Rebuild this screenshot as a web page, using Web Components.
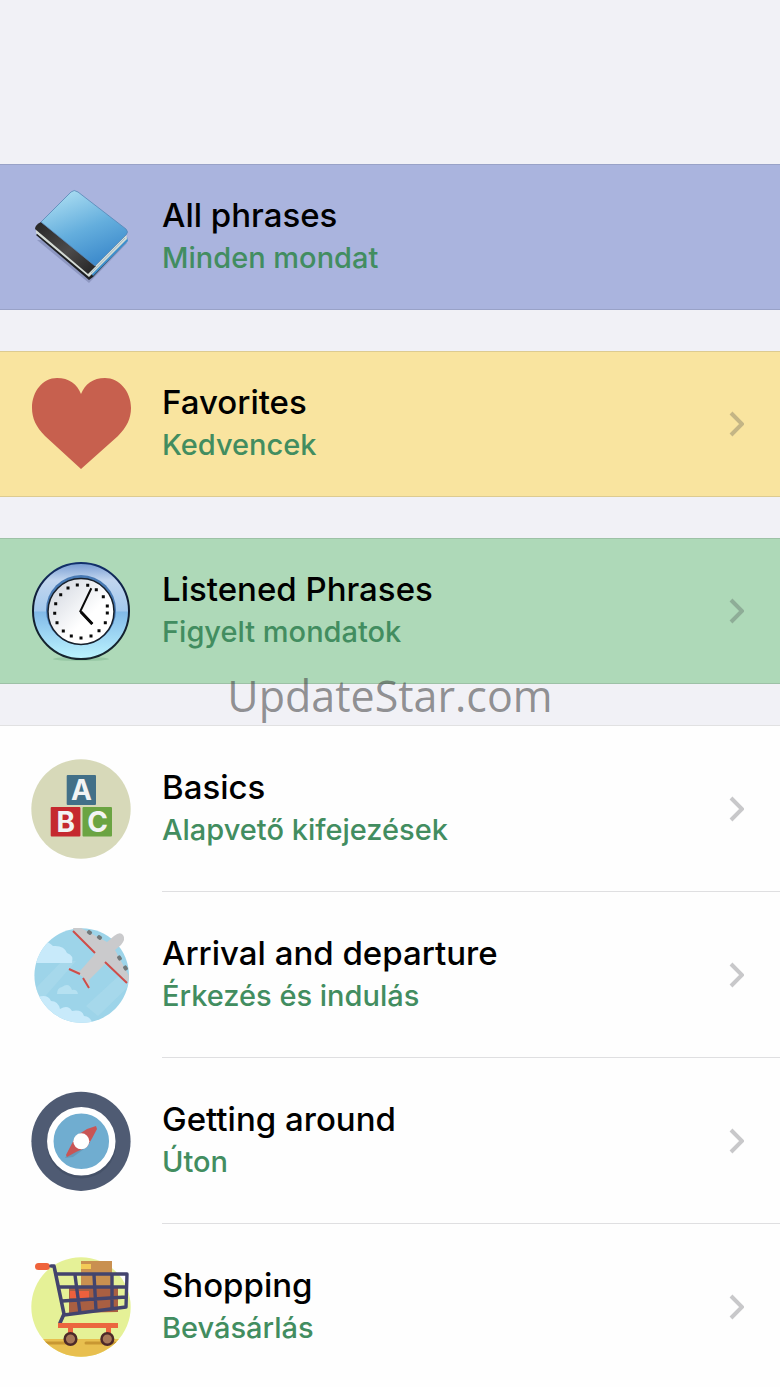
<!DOCTYPE html>
<html lang="en">
<head>
  <meta charset="utf-8">
  <meta name="viewport" content="width=device-width, initial-scale=1">
  <title>Phrases</title>
  <style>
    body {
      margin: 0;
      background: #f1f1f6;
      color: #000;
      font-family: Inter, "Liberation Sans", sans-serif;
    }
  </style>
</head>
<body>
  <phrase-app>
    <phrase-group tone="blue">
      <phrase-row icon="book">All phrases<span slot="translation" lang="hu">Minden mondat</span></phrase-row>
    </phrase-group>
    <phrase-group tone="yellow">
      <phrase-row icon="heart" chevron>Favorites<span slot="translation" lang="hu">Kedvencek</span></phrase-row>
    </phrase-group>
    <phrase-group tone="green">
      <phrase-row icon="clock" chevron>Listened Phrases<span slot="translation" lang="hu">Figyelt mondatok</span></phrase-row>
    </phrase-group>
    <phrase-group>
      <phrase-row icon="blocks" chevron>Basics<span slot="translation" lang="hu">Alapvető kifejezések</span></phrase-row>
      <phrase-row icon="plane" chevron>Arrival and departure<span slot="translation" lang="hu">Érkezés és indulás</span></phrase-row>
      <phrase-row icon="compass" chevron>Getting around<span slot="translation" lang="hu">Úton</span></phrase-row>
      <phrase-row icon="cart" chevron>Shopping<span slot="translation" lang="hu">Bevásárlás</span></phrase-row>
    </phrase-group>
    <site-mark slot="mark">UpdateStar.com</site-mark>
  </phrase-app>

  <script>
    const ICONS = {
      book: `
        <defs>
          <linearGradient id="cover" x1=".3" y1="0" x2=".75" y2="1">
            <stop offset="0" stop-color="#a9dcf1"/>
            <stop offset=".5" stop-color="#64aedd"/>
            <stop offset="1" stop-color="#3785c9"/>
          </linearGradient>
          <linearGradient id="spine" x1="0" y1="0" x2="1" y2="1">
            <stop offset="0" stop-color="#262626"/>
            <stop offset=".55" stop-color="#4c4a4a"/>
            <stop offset="1" stop-color="#222"/>
          </linearGradient>
        </defs>
        <path d="M6 53 58 96 96 56 90 50Z" fill="#59618c" opacity=".35"/>
        <path d="M5 48 58 93 62 90 96 54 95 50 58 86 8 45Z" fill="#1e2023"/>
        <path d="M62 89 97 54 96 50 60 86Z" fill="#3d8ecb"/>
        <path d="M5 43 5 46 58 90 96 52 95 46 60 80Z" fill="#d5dcd6"/>
        <path d="M60 86 94 51" fill="none" stroke="#9fbccb" stroke-width="1"/>
        <path d="M10 35Q4 38 4 42L57 87 65 79Z" fill="url(#spine)"/>
        <path d="M10 35 40 5Q43 2 47 5L95 42Q98 45 95 48L64 79Z" fill="url(#cover)" stroke="#5686b6" stroke-width=".8"/>`,
      heart: `<path d="M50 95 14 62C5 53 1 44 1 34 1 17 12 4 26 4c12 0 20 6 24 16C54 10 62 4 74 4c14 0 26 13 26 30 0 10-4 19-13 28Z" fill="#c7604e"/>`,
      clock: `
        <defs>
          <linearGradient id="ring" x1="0" y1="0" x2="0" y2="1">
            <stop offset="0" stop-color="#769bd2"/>
            <stop offset=".18" stop-color="#c2d6ef"/>
            <stop offset=".5" stop-color="#a3c9ed"/>
            <stop offset=".51" stop-color="#82bae8"/>
            <stop offset="1" stop-color="#bcf4ff"/>
          </linearGradient>
          <linearGradient id="rim" x1="0" y1="0" x2="0" y2="1">
            <stop offset="0" stop-color="#12306d"/>
            <stop offset=".4" stop-color="#101c30"/>
            <stop offset="1" stop-color="#17262e"/>
          </linearGradient>
          <linearGradient id="face" x1="0" y1="0" x2="1" y2="1">
            <stop offset="0" stop-color="#cdd2dc"/>
            <stop offset=".6" stop-color="#fff"/>
          </linearGradient>
        </defs>
        <ellipse cx="50" cy="98" rx="28" ry="2" fill="#65a276" opacity=".3"/>
        <circle cx="50" cy="50" r="48" fill="url(#ring)" stroke="url(#rim)" stroke-width="2"/>
        <circle cx="50" cy="49" r="35" fill="#4779b3"/>
        <circle cx="50" cy="50.500" r="33" fill="url(#face)" stroke="#17202b" stroke-width="1.500"/>
        <path d="M46.300 24h.01M56.700 24.300h.01M65.300 28.700h.01M72.300 35.700h.01M76.300 45h.01M76.300 52h.01M74.300 61.700h.01M68 69.700h.01M60 75h.01M50 77h.01M40.300 75h.01M32.300 70h.01M26 61.700h.01M23.700 52.300h.01M24.700 42.700h.01M29.700 33.700h.01M37 27h.01" stroke="#090909" stroke-width="3" stroke-linecap="square"/>
        <path d="M60.300 27.300 49.300 50.300 61.300 63" fill="none" stroke="#080808" stroke-width="2"/>
        <path d="M50 51 61.300 63" stroke="#080808" stroke-width="3"/>`,
      blocks: `
        <circle cx="50" cy="50" r="49.700" fill="#d7d9b9"/>
        <rect x="35.700" y="16" width="29.300" height="30" rx="1" fill="#427088"/>
        <rect x="19.700" y="48" width="29.700" height="29.500" rx="1" fill="#c5292f"/>
        <rect x="51.500" y="48" width="29.500" height="29.500" rx="1" fill="#6ba442"/>
        <g fill="#f2f4f4" font-family="Inter, Liberation Sans, sans-serif" font-size="28" font-weight="700" text-anchor="middle">
          <text x="50.500" y="41">A</text><text x="34.700" y="73">B</text><text x="66.500" y="73">C</text>
        </g>`,
      plane: `
        <defs><clipPath id="sky"><circle cx="50.700" cy="50.500" r="47.300"/></clipPath></defs>
        <g clip-path="url(#sky)">
          <path d="M0 0h100v100H0z" fill="#9dd4e9"/>
          <path d="M4 64 31 36 45 36 10 76ZM55 81 93 46 98 61 67 91Z" fill="#b4deed" opacity=".4"/>
          <path d="M3 38V20Q13 12 22 21 33 20 36 28 43 30 41 38Z" fill="#c8eafa"/>
          <path d="M26 69Q26 63 31 62 38 57 41 65 46 64 47 69Z" fill="#b6e1f1"/>
          <path d="M7 79V72Q17 69 20 76 27 76 29 84 37 79 41 86 51 84 53 91 59 91 62 99H7Z" fill="#c8eafa"/>
        </g>
        <path d="M43 6 42 3 50 3 76 17 83 11Q89 6 92 10 95 14 90 20L84 25 98 51 97 57 75 38 58 55 59 64 53 53 49 50 39 44 49 46 64 29Z" fill="#cacacc"/>
        <g fill="#717879">
          <rect x="-2.500" y="-2" width="5" height="4" rx="1.500" transform="translate(58.500 7.500) rotate(35)"/>
          <rect x="-2.500" y="-2" width="5" height="4" rx="1.500" transform="translate(68.500 12.500) rotate(35)"/>
          <rect x="-2.500" y="-2" width="5" height="4" rx="1.500" transform="translate(88.500 33) rotate(55)"/>
          <rect x="-2.500" y="-2" width="5" height="4" rx="1.500" transform="translate(94.500 43) rotate(55)"/>
        </g>
        <path d="M42 6 64 28M74 37 96 58M38 44 49 49M52 53 58 63" fill="none" stroke="#cf4d49" stroke-width="2"/>`,
      compass: `
        <circle cx="50" cy="50.300" r="49.600" fill="#4f5b73"/>
        <circle cx="50.500" cy="53" r="34.500" fill="#414d63" opacity=".65"/>
        <circle cx="50.300" cy="50.300" r="31" fill="#70add0" stroke="#fff" stroke-width="6.500"/>
        <path d="M34 67 45 49 57 55 42 66Z" fill="#57758f" opacity=".35"/>
        <path d="M65 35 56 38 45 45Q39 56 35 64L36 66 45 61 56 56Q62 46 66 38Z" fill="#c95555"/>
        <circle cx="50.300" cy="50.300" r="8" fill="#fff"/>`,
      cart: `
        <defs><clipPath id="ground"><circle cx="50" cy="50" r="49.700"/></clipPath></defs>
        <g clip-path="url(#ground)">
          <path d="M0 0h100v100H0z" fill="#e5f197"/>
          <path d="M0 82h100v18H0z" fill="#e8bf4f"/>
          <path d="M10 86h32M55 86h29" stroke="#c89732" stroke-width="3" stroke-linecap="round"/>
        </g>
        <path d="M50 4h31v27H50z" fill="#c99050"/>
        <path d="M50 7h10v5H50z" fill="#f3ca57"/>
        <path d="M38 31h49v24L38 56Z" fill="#a95f42"/>
        <path d="M39 34h19v7H39z" fill="#ed603d"/>
        <rect x="4" y="6" width="15" height="7" rx="3.500" fill="#ef633b"/>
        <g fill="none" stroke="#43446d" stroke-linecap="round" stroke-linejoin="round">
          <path d="M20 9h3l10 48-4 9" stroke-width="3.600"/>
          <path d="M25 17h71l-1 33-62 8M28 30h67M31 44l64-4M44 18l5 38M63 18l2 35M81 18v33" stroke-width="3.400"/>
        </g>
        <path d="M27 66h60v5H80v10h-5V71H42v10h-5V71H27Z" fill="#eb663f"/>
        <g fill="#a67858" stroke="#4c2929" stroke-width="2.500">
          <circle cx="39.500" cy="82" r="5.800"/><circle cx="76.300" cy="82" r="5.800"/>
        </g>`,
    };

    class PhraseIcon extends HTMLElement {
      connectedCallback() {
        this.attachShadow({ mode: 'open' });
        this.shadowRoot.innerHTML = `
          <style>
            :host {
              display: block;
              width: 100px;
              height: 100px;
            }

            svg {
              display: block;
              overflow: visible;
            }
          </style>
          <svg width="100" height="100" viewBox="0 0 100 100" aria-hidden="true">${ICONS[this.getAttribute('name')]}</svg>
        `;
      }
    }

    class PhraseRow extends HTMLElement {
      connectedCallback() {
        const chevron = this.hasAttribute('chevron')
          ? '<svg class="chevron" width="16" height="28" viewBox="0 0 16 28" aria-hidden="true"><path d="M3 3 14 14 3 25"/></svg>'
          : '';
        this.attachShadow({ mode: 'open' });
        this.shadowRoot.innerHTML = `
          <style>
            :host {
              display: block;
            }

            a {
              display: flex;
              align-items: stretch;
              gap: 31px;
              height: var(--row-height, 144px);
              padding-left: 31px;
              color: inherit;
              text-decoration: none;
            }

            phrase-icon {
              flex: none;
              align-self: center;
            }

            .body {
              flex: 1;
              min-width: 0;
              display: flex;
              align-items: center;
              justify-content: space-between;
              padding-right: 36px;
            }

            /* hairline starts at the text, not at the icon */
            :host(:not(:last-child)) .body {
              border-bottom: 1px solid #dfdfe1;
            }

            .title,
            .translation {
              display: block;
              font-weight: 500;
            }

            .title {
              font-size: 33px;
              line-height: 42px;
            }

            .translation {
              font-size: 29px;
              line-height: 44px;
              color: #428d60;
            }

            .chevron {
              flex: none;
              fill: none;
              stroke: rgba(60, 60, 67, 0.28);
              stroke-width: 4;
            }
          </style>
          <a href="#${this.getAttribute('icon')}">
            <phrase-icon name="${this.getAttribute('icon')}"></phrase-icon>
            <span class="body">
              <span>
                <span class="title"><slot></slot></span>
                <span class="translation"><slot name="translation"></slot></span>
              </span>
              ${chevron}
            </span>
          </a>
        `;
      }
    }

    class PhraseGroup extends HTMLElement {
      connectedCallback() {
        this.attachShadow({ mode: 'open' });
        this.shadowRoot.innerHTML = `
          <style>
            :host {
              --row-height: 166px;
              display: block;
              flex: none;
              background: #fefefe;
              border: solid rgba(60, 60, 67, 0.15);
              border-width: 1px 0;
            }

            :host([tone]) {
              --row-height: 144px;
            }

            :host([tone="blue"]) {
              background: #aab4de;
            }

            :host([tone="yellow"]) {
              background: #f9e49f;
            }

            :host([tone="green"]) {
              background: #aed9b8;
            }
          </style>
          <slot></slot>
        `;
      }
    }

    class SiteMark extends HTMLElement {
      connectedCallback() {
        this.attachShadow({ mode: 'open' });
        this.shadowRoot.innerHTML = `
          <style>
            :host {
              display: block;
              padding-top: 4px;
              font-family: "Open Sans", "Noto Sans", sans-serif;
              font-size: 43px;
              line-height: 60px;
              color: rgba(60, 60, 60, 0.55);
            }
          </style>
          <slot></slot>
        `;
      }
    }

    class PhraseApp extends HTMLElement {
      connectedCallback() {
        this.attachShadow({ mode: 'open' });
        this.shadowRoot.innerHTML = `
          <style>
            :host {
              display: block;
              position: relative;
              height: 100vh;
              overflow: hidden;
            }

            main {
              box-sizing: border-box;
              height: 100%;
              display: flex;
              flex-direction: column;
              gap: 41px;
              padding-top: 164px;
              overflow-y: auto;
              scrollbar-width: none;
            }

            .mark {
              position: absolute;
              inset: 0;
              display: flex;
              align-items: center;
              justify-content: center;
              pointer-events: none;
            }
          </style>
          <main><slot></slot></main>
          <div class="mark"><slot name="mark"></slot></div>
        `;
      }
    }

    customElements.define('phrase-icon', PhraseIcon);
    customElements.define('phrase-row', PhraseRow);
    customElements.define('phrase-group', PhraseGroup);
    customElements.define('site-mark', SiteMark);
    customElements.define('phrase-app', PhraseApp);
  </script>
</body>
</html>
